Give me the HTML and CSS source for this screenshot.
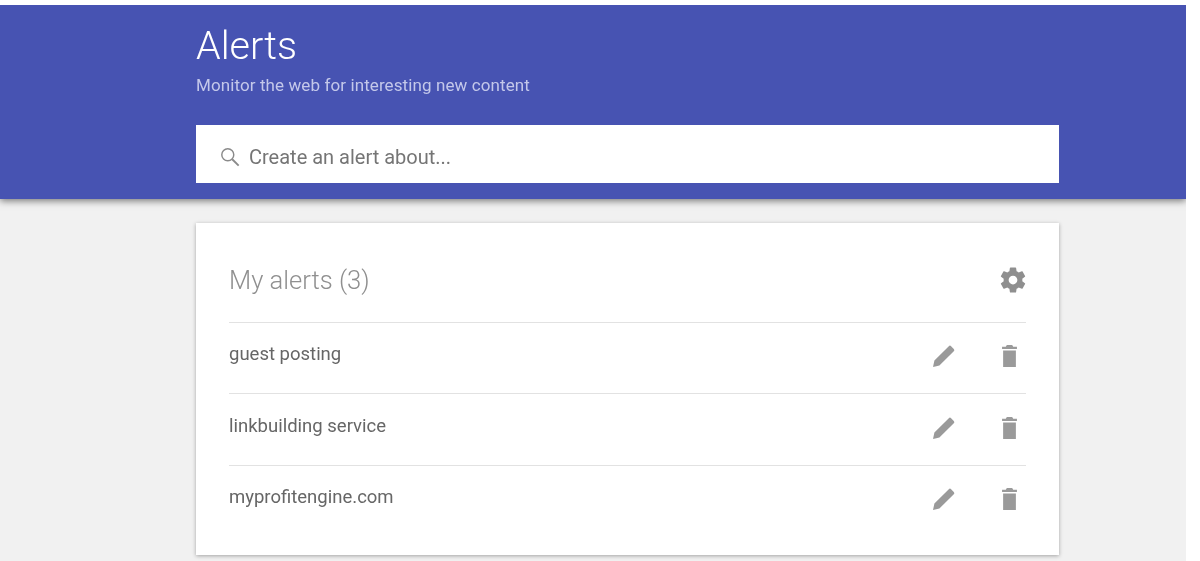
FILE: index.html
```html
<!DOCTYPE html>
<html lang="en">
<head>
<meta charset="utf-8">
<title>Alerts</title>
<link rel="stylesheet" href="styles.css">
</head>
<body>
<div class="page">
  <header class="banner">
    <div class="column">
      <h1 class="title">Alerts</h1>
      <p class="subtitle">Monitor the web for interesting new content</p>
      <div class="search">
        <svg class="search-icon" viewBox="0 0 18 18"><circle cx="7" cy="7" r="5.4" fill="none" stroke="#8a8a8a" stroke-width="1.3"/><path d="M11 11l5.8 5.8" stroke="#8a8a8a" stroke-width="1.7" fill="none"/></svg>
        <span class="search-text">Create an alert about...</span>
      </div>
    </div>
  </header>
  <main class="column card">
    <div class="card-head">
      <h2 class="card-title">My alerts (3)</h2>
      <svg class="gear" viewBox="0 0 24 24"><path fill="#8f8f8f" d="M19.43 12.98c.04-.32.07-.64.07-.98s-.03-.66-.07-.98l2.11-1.65c.19-.15.24-.42.12-.64l-2-3.46c-.12-.22-.39-.3-.61-.22l-2.49 1c-.52-.4-1.08-.73-1.69-.98l-.38-2.65C14.46 2.18 14.25 2 14 2h-4c-.25 0-.46.18-.49.42l-.38 2.65c-.61.25-1.17.59-1.69.98l-2.49-1c-.23-.09-.49 0-.61.22l-2 3.46c-.13.22-.07.49.12.64l2.11 1.65c-.04.32-.07.65-.07.98s.03.66.07.98l-2.11 1.65c-.19.15-.24.42-.12.64l2 3.46c.12.22.39.3.61.22l2.49-1c.52.4 1.08.73 1.69.98l.38 2.65c.03.24.24.42.49.42h4c.25 0 .46-.18.49-.42l.38-2.65c.61-.25 1.17-.59 1.69-.98l2.49 1c.23.09.49 0 .61-.22l2-3.46c.12-.22.07-.49-.12-.64l-2.11-1.65zM12 15.5c-1.93 0-3.5-1.57-3.5-3.5s1.57-3.5 3.5-3.5 3.5 1.57 3.5 3.5-1.57 3.5-3.5 3.5z"/></svg>
    </div>
    <div class="row">
      <span class="row-name">guest posting</span>
      <svg class="pencil" viewBox="0 0 24 24"><path d="M1 23l1.4-6.4L16.8 2.2a1.6 1.6 0 0 1 2.3 0l2.7 2.7a1.6 1.6 0 0 1 0 2.3L7.4 21.6z" fill="#9a9a9a"/></svg>
      <svg class="trash" viewBox="0 0 16 20" preserveAspectRatio="none"><path d="M5.5 0h5l1 1.6H15v2H1v-2h3.5zM2 5h12v15H2z" fill="#9a9a9a"/></svg>
    </div>
    <div class="row">
      <span class="row-name">linkbuilding service</span>
      <svg class="pencil" viewBox="0 0 24 24"><path d="M1 23l1.4-6.4L16.8 2.2a1.6 1.6 0 0 1 2.3 0l2.7 2.7a1.6 1.6 0 0 1 0 2.3L7.4 21.6z" fill="#9a9a9a"/></svg>
      <svg class="trash" viewBox="0 0 16 20" preserveAspectRatio="none"><path d="M5.5 0h5l1 1.6H15v2H1v-2h3.5zM2 5h12v15H2z" fill="#9a9a9a"/></svg>
    </div>
    <div class="row">
      <span class="row-name">myprofitengine.com</span>
      <svg class="pencil" viewBox="0 0 24 24"><path d="M1 23l1.4-6.4L16.8 2.2a1.6 1.6 0 0 1 2.3 0l2.7 2.7a1.6 1.6 0 0 1 0 2.3L7.4 21.6z" fill="#9a9a9a"/></svg>
      <svg class="trash" viewBox="0 0 16 20" preserveAspectRatio="none"><path d="M5.5 0h5l1 1.6H15v2H1v-2h3.5zM2 5h12v15H2z" fill="#9a9a9a"/></svg>
    </div>
  </main>
</div>
</body>
</html>
```
FILE: styles.css
```css
html, body {
  margin: 0;
  height: 561px;
  overflow: hidden;
  background: #fff;
  font-family: Roboto, "Liberation Sans", sans-serif;
}
.page {
  width: 1186px;
  height: 556px;
  margin-top: 5px;
  background: #f1f1f1;
  overflow: hidden;
  filter: blur(0.75px);
}
.banner {
  height: 194px;
  background: #4753b2;
  box-shadow: 0 2px 7px rgba(0, 0, 0, 0.5);
}
.column {
  width: 863px;
  margin-left: 196px;
  box-sizing: border-box;
}
.title {
  margin: 0;
  padding-top: 18px;
  font-size: 39.5px;
  line-height: 46px;
  font-weight: 300;
  color: #fff;
}
.subtitle {
  margin: 7px 0 0;
  font-size: 17px;
  letter-spacing: 0.1px;
  line-height: 18px;
  color: #c4c8ea;
}
.search {
  display: flex;
  align-items: center;
  height: 58px;
  margin-top: 31px;
  padding: 5px 0 0 24px;
  box-sizing: border-box;
  background: #fff;
}
.search-icon {
  width: 20px;
  height: 20px;
  margin-right: 9px;
}
.search-text {
  font-size: 20px;
  color: #757575;
}
.card {
  height: 332px;
  margin-top: 24px;
  padding: 0 33px;
  background: #fff;
  box-shadow: 0 1px 4px rgba(0, 0, 0, 0.32);
}
.card-head {
  display: flex;
  align-items: center;
  justify-content: space-between;
  height: 98.8px;
  padding-top: 15px;
  box-sizing: border-box;
}
.card-title {
  margin: 0;
  font-size: 25.6px;
  font-weight: 300;
  color: #8f8f8f;
}
.gear {
  width: 30px;
  height: 30px;
  margin-right: -2px;
}
.row {
  display: flex;
  align-items: center;
  height: 71.6px;
  padding-bottom: 4px;
  border-top: 1px solid #e2e2e2;
  box-sizing: border-box;
}
.row-name {
  flex: 1;
  font-size: 18.5px;
  color: #666;
  margin-top: -4px;
}
.pencil {
  width: 24px;
  height: 24px;
  margin-right: 45px;
}
.trash {
  width: 17px;
  height: 22px;
  margin-right: 8px;
}
```
